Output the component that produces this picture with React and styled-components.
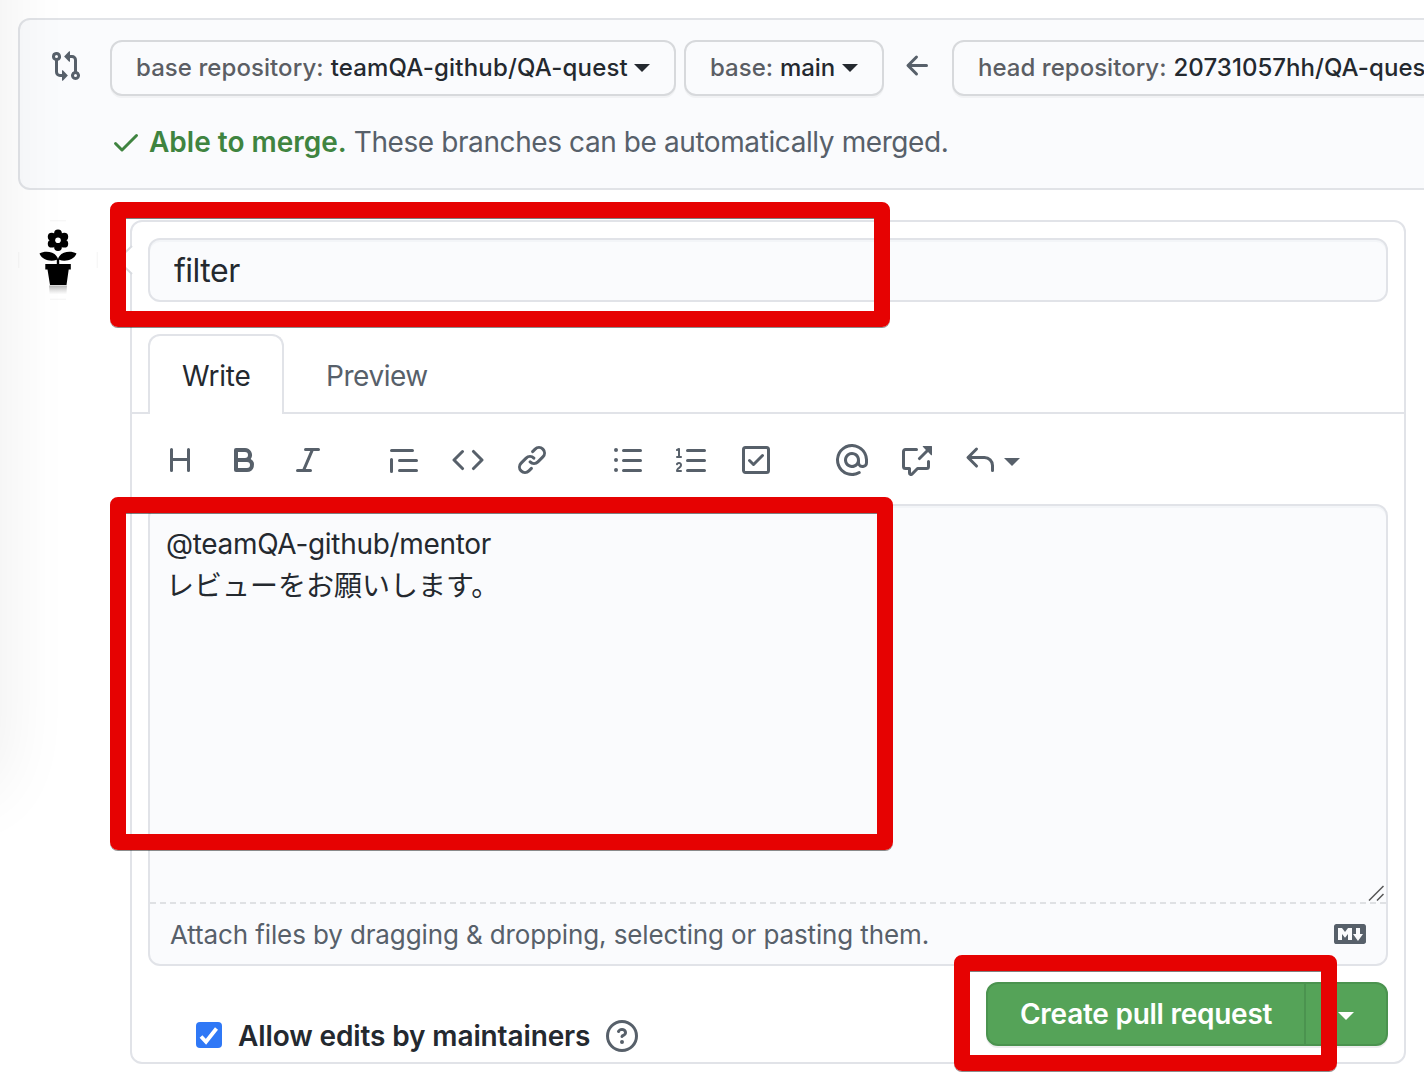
import React from "react";
import styled, { createGlobalStyle } from "styled-components";

const GlobalStyle = createGlobalStyle`
  *, *::before, *::after { box-sizing: border-box; }
  html, body { margin: 0; padding: 0; background: #fff; }
  body {
    overflow: hidden;
    color: #24292f;
    font-family: Inter, "Noto Sans CJK JP", sans-serif;
    font-size: 28px;
  }
  button, textarea, input { font: inherit; color: inherit; margin: 0; }
`;

const paths = {
  compare:
    "M9.573.677L7.177 3.073a.25.25 0 000 .354l2.396 2.396A.25.25 0 0010 5.646V4h1a1 1 0 011 1v5.628a2.251 2.251 0 101.5 0V5A2.5 2.5 0 0011 2.5h-1V.854a.25.25 0 00-.427-.177zM12.75 12a.75.75 0 100 1.5.75.75 0 000-1.5zM3.25 2.5a.75.75 0 100 1.5.75.75 0 000-1.5zm-2.25.75a2.25 2.25 0 113 2.122V11a1 1 0 001 1h1v-1.646a.25.25 0 01.427-.177l2.396 2.396a.25.25 0 010 .354l-2.396 2.396A.25.25 0 016 15.146V13.5H5A2.5 2.5 0 012.5 11V5.372A2.25 2.25 0 011 3.25z",
  check:
    "M13.78 4.22a.75.75 0 010 1.06l-7.25 7.25a.75.75 0 01-1.06 0L2.22 9.28a.75.75 0 011.06-1.06L6 10.94l6.72-6.72a.75.75 0 011.06 0z",
  arrowLeft:
    "M7.78 12.53a.75.75 0 01-1.06 0L2.47 8.28a.75.75 0 010-1.06l4.25-4.25a.75.75 0 011.06 1.06L4.81 7h7.44a.75.75 0 010 1.5H4.81l2.97 2.97a.75.75 0 010 1.06z",
  heading:
    "M3.75 2a.75.75 0 01.75.75V7h7V2.75a.75.75 0 011.5 0v10.5a.75.75 0 01-1.5 0V8.5h-7v4.75a.75.75 0 01-1.5 0V2.75A.75.75 0 013.75 2z",
  bold: "M4 2a1 1 0 00-1 1v10a1 1 0 001 1h5.5a3.5 3.5 0 001.852-6.47A3.5 3.5 0 008.5 2H4zm4.5 5a1.5 1.5 0 100-3H5v3h3.5zM5 9v3h4.5a1.5 1.5 0 000-3H5z",
  italic:
    "M6 2.75A.75.75 0 016.75 2h6.5a.75.75 0 010 1.5h-2.505l-3.858 9H9.25a.75.75 0 010 1.5h-6.5a.75.75 0 010-1.5h2.505l3.858-9H6.75A.75.75 0 016 2.75z",
  quote:
    "M1.75 2.5a.75.75 0 000 1.5h10.5a.75.75 0 000-1.5H1.75zm4 5a.75.75 0 000 1.5h8.5a.75.75 0 000-1.5h-8.5zm0 5a.75.75 0 000 1.5h8.5a.75.75 0 000-1.5h-8.5zM2.5 7.75a.75.75 0 00-1.5 0v6a.75.75 0 001.5 0v-6z",
  code: "M4.72 3.22a.75.75 0 011.06 1.06L2.06 8l3.72 3.72a.75.75 0 11-1.06 1.06L.47 8.53a.75.75 0 010-1.06l4.25-4.25zm6.56 0a.75.75 0 10-1.06 1.06L13.94 8l-3.72 3.72a.75.75 0 101.06 1.06l4.25-4.25a.75.75 0 000-1.06l-4.25-4.25z",
  link: "M7.775 3.275a.75.75 0 001.06 1.06l1.25-1.25a2 2 0 112.83 2.83l-2.5 2.5a2 2 0 01-2.83 0 .75.75 0 00-1.06 1.06 3.5 3.5 0 004.95 0l2.5-2.5a3.5 3.5 0 00-4.95-4.95l-1.25 1.25zm-4.69 9.64a2 2 0 010-2.83l2.5-2.5a2 2 0 012.83 0 .75.75 0 001.06-1.06 3.5 3.5 0 00-4.95 0l-2.5 2.5a3.5 3.5 0 004.95 4.95l1.25-1.25a.75.75 0 00-1.06-1.06l-1.25 1.25a2 2 0 01-2.83 0z",
  bullets:
    "M2 4a1 1 0 100-2 1 1 0 000 2zm3.75-1.5a.75.75 0 000 1.5h8.5a.75.75 0 000-1.5h-8.5zm0 5a.75.75 0 000 1.5h8.5a.75.75 0 000-1.5h-8.5zm0 5a.75.75 0 000 1.5h8.5a.75.75 0 000-1.5h-8.5zM3 8a1 1 0 11-2 0 1 1 0 012 0zm-1 6a1 1 0 100-2 1 1 0 000 2z",
  numbers:
    "M2.003 2.5a.5.5 0 00-.723-.447l-1.003.5a.5.5 0 00.446.895l.28-.14V6H.5a.5.5 0 000 1h2.006a.5.5 0 100-1h-.503V2.5zM5 3.25a.75.75 0 01.75-.75h8.5a.75.75 0 010 1.5h-8.5A.75.75 0 015 3.25zm0 5a.75.75 0 01.75-.75h8.5a.75.75 0 010 1.5h-8.5A.75.75 0 015 8.25zm0 5a.75.75 0 01.75-.75h8.5a.75.75 0 010 1.5h-8.5a.75.75 0 01-.75-.75zM.924 10.32l.003-.004a.851.851 0 01.144-.153A.66.66 0 011.5 10c.195 0 .306.068.374.146a.57.57 0 01.128.376c0 .453-.269.682-.8 1.078l-.035.025C.692 11.98 0 12.495 0 13.5a.5.5 0 00.5.5h2.003a.5.5 0 000-1H1.146c.132-.197.351-.372.654-.597l.047-.035c.47-.35 1.156-.858 1.156-1.845 0-.365-.118-.744-.377-1.038-.268-.303-.658-.484-1.126-.484-.48 0-.84.202-1.068.392a1.858 1.858 0 00-.348.384l-.007.011-.002.004-.001.002-.001.001a.5.5 0 00.851.525z",
  tasks:
    "M2.5 2.75a.25.25 0 01.25-.25h10.5a.25.25 0 01.25.25v10.5a.25.25 0 01-.25.25H2.75a.25.25 0 01-.25-.25V2.75zM2.75 1A1.75 1.75 0 001 2.75v10.5c0 .966.784 1.75 1.75 1.75h10.5A1.75 1.75 0 0015 13.25V2.75A1.75 1.75 0 0013.25 1H2.75zm9.03 5.28a.75.75 0 00-1.06-1.06L6.75 9.19 5.28 7.72a.75.75 0 00-1.06 1.06l2 2a.75.75 0 001.06 0l4.5-4.5z",
  mention:
    "M4.75 2.37a6.5 6.5 0 006.5 11.26.75.75 0 01.75 1.298 8 8 0 113.994-7.273.754.754 0 01.006.095v1.5a2.75 2.75 0 01-5.072 1.475A4 4 0 1112 8v1.25a1.25 1.25 0 002.5 0V7.867a6.5 6.5 0 00-9.75-5.496V2.37zM10.5 8a2.5 2.5 0 10-5 0 2.5 2.5 0 005 0z",
  crossReference:
    "M16 1.25v4.146a.25.25 0 01-.427.177L14.03 4.03l-3.75 3.75a.75.75 0 11-1.06-1.06l3.75-3.75-1.543-1.543A.25.25 0 0111.604 1h4.146a.25.25 0 01.25.25zM2.75 3.5a.25.25 0 00-.25.25v7.5c0 .138.112.25.25.25h2a.75.75 0 01.75.75v2.19l2.72-2.72a.75.75 0 01.53-.22h4.5a.25.25 0 00.25-.25v-2.5a.75.75 0 111.5 0v2.5A1.75 1.75 0 0113.25 13H9.06l-2.573 2.573A1.457 1.457 0 014 14.543V13H2.75A1.75 1.75 0 011 11.25v-7.5C1 2.784 1.784 2 2.75 2h5.5a.75.75 0 010 1.5h-5.5z",
  reply:
    "M6.78 1.97a.75.75 0 010 1.06L3.81 6h6.44A4.75 4.75 0 0115 10.75v2.5a.75.75 0 01-1.5 0v-2.5a3.25 3.25 0 00-3.25-3.25H3.81l2.97 2.97a.75.75 0 11-1.06 1.06L1.47 7.28a.75.75 0 010-1.06l4.25-4.25a.75.75 0 011.06 0z",
  question:
    "M8 1.5a6.5 6.5 0 100 13 6.5 6.5 0 000-13zM0 8a8 8 0 1116 0A8 8 0 010 8zm9 3a1 1 0 11-2 0 1 1 0 012 0zM6.92 6.085c.081-.16.19-.299.34-.398.145-.097.371-.187.74-.187.28 0 .553.087.738.225A.613.613 0 019 6.25c0 .177-.04.264-.077.318a.956.956 0 01-.277.245c-.076.051-.158.1-.258.161l-.007.004a7.728 7.728 0 00-.313.195 2.416 2.416 0 00-.692.661.75.75 0 001.248.832.956.956 0 01.276-.245 6.3 6.3 0 01.26-.16l.006-.004c.093-.057.204-.123.313-.195.222-.149.487-.355.692-.662.214-.32.329-.702.329-1.15 0-.76-.36-1.348-.863-1.725A2.76 2.76 0 008 4c-.631 0-1.155.16-1.572.438-.413.276-.68.638-.849.977a.75.75 0 101.342.67z",
  markdown:
    "M14.85 3H1.15C.52 3 0 3.52 0 4.15v7.69C0 12.48.52 13 1.15 13h13.69c.64 0 1.15-.52 1.15-1.15v-7.7C16 3.52 15.48 3 14.85 3zM9 11H7V8L5.5 9.92 4 8v3H2V5h2l1.5 2L7 5h2v6zm2.99.5L9.5 8H11V5h2v3h1.5l-2.51 3.5z",
};

const Svg = styled.svg`
  display: block;
  flex: none;
  width: 32px;
  height: 32px;
  fill: currentColor;
`;

const Icon = ({ name }) => (
  <Svg viewBox="0 0 16 16" aria-hidden="true">
    <path fillRule="evenodd" d={paths[name]} />
  </Svg>
);

const Page = styled.main`
  position: relative;
  width: 1424px;
  height: 1084px;
  padding: 18px 0 0 18px;
  overflow: hidden;
`;

/* Soft shadow cast along the left edge, rounding off near its lower end */
const EdgeShade = styled.div`
  position: absolute;
  top: -100px;
  left: -100px;
  width: 100px;
  height: 890px;
  border-radius: 0 0 30px 0;
  box-shadow: 0 0 72px 2px rgba(0, 0, 0, 0.07);
  pointer-events: none;
`;

const ComparePanel = styled.section`
  width: 1500px;
  height: 172px;
  padding: 20px 30px;
  border: 2px solid #e1e3e7;
  border-radius: 12px;
  background: #fafbfd;
`;

const CompareRow = styled.div`
  display: flex;
  align-items: center;
  height: 56px;
  color: #57606a;
`;

const IconSlot = styled.span`
  display: flex;
  padding-bottom: 4px;
  margin: ${(p) => p.$margin};
`;

const RefButton = styled.button`
  display: flex;
  align-items: center;
  flex: none;
  width: ${(p) => p.$width}px;
  height: 56px;
  margin-right: ${(p) => p.$gap || 0}px;
  padding: 0 0 0 24px;
  border: 2px solid #d7d9dc;
  border-radius: 12px;
  background: #fafbfd;
  box-shadow: 0 2px 0 rgba(27, 31, 36, 0.04);
  color: #24292f;
  font-size: 24px;
  font-weight: 500;
  line-height: 32px;
  white-space: nowrap;
`;

const RefLabel = styled.span`
  margin-right: 7px;
  color: #5b5e64;
  letter-spacing: ${(p) => p.$track || 0}px;
`;

const RefName = styled.span`
  color: #24292f;
  letter-spacing: ${(p) => p.$track || 0}px;
`;

const Caret = styled.span`
  width: 0;
  height: 0;
  margin: ${(p) => p.$margin || "0"};
  border: 8px solid transparent;
  border-top-color: currentColor;
  border-bottom: 0;
`;

const MergeStatus = styled.p`
  display: flex;
  align-items: center;
  height: 42px;
  margin: 25px 0 0 60px;
  color: #57606a;
  letter-spacing: ${(p) => p.$track}px;
  white-space: nowrap;
  & > svg { color: #3f8440; }
`;

const MergeOk = styled.strong`
  margin: 0 7px;
  color: #3f8440;
  font-weight: 600;
  letter-spacing: 0;
`;

const Discussion = styled.div`
  display: flex;
  align-items: flex-start;
  margin-top: 30px;
`;

const Avatar = styled.svg`
  display: block;
  flex: none;
  width: 80px;
  height: 80px;
  margin-right: 32px;
`;

const Composer = styled.form`
  position: relative;
  width: 1276px;
  height: 844px;
  padding-top: 16px;
  border: 2px solid #e1e3e8;
  border-radius: 12px;
  background: #fff;
`;

const Notch = styled.svg`
  position: absolute;
  left: -16px;
  top: 22px;
  width: 17px;
  height: 32px;
`;

const TitleField = styled.input`
  display: block;
  width: 1240px;
  height: 64px;
  margin: 0 16px;
  padding: 1px 24px 0;
  border: 2px solid #e1e3e8;
  border-radius: 12px;
  outline: 0;
  background: #fafbfd;
  box-shadow: inset 0 2px 0 rgba(208, 215, 222, 0.15);
  font-size: 32px;
  letter-spacing: ${(p) => p.$track}px;
`;

const Tabs = styled.div`
  display: flex;
  align-items: flex-end;
  height: 112px;
  padding-left: 16px;
  border-bottom: 2px solid #e1e3e8;
`;

const Tab = styled.button`
  height: 80px;
  margin-bottom: -2px;
  padding: 2px 0 0 ${(p) => p.$inset}px;
  width: ${(p) => p.$width}px;
  border: 2px solid ${(p) => (p.$active ? "#e1e3e8" : "transparent")};
  border-bottom: 0;
  border-radius: 12px 12px 0 0;
  background: ${(p) => (p.$active ? "#fff" : "transparent")};
  color: ${(p) => (p.$active ? "#24292f" : "#57606a")};
  letter-spacing: ${(p) => p.$track}px;
  text-align: left;
`;

const Toolbar = styled.div`
  display: flex;
  align-items: center;
  gap: 64px;
  height: 90px;
  padding: 2px 32px 0;
  color: #57606a;
`;

const ToolGroup = styled.div`
  display: flex;
  align-items: center;
  gap: 32px;
`;

const ReplyTool = styled.span`
  display: flex;
  align-items: center;
  gap: 8px;
`;

const Editor = styled.div`
  position: relative;
  display: flex;
  flex-direction: column;
  width: 1240px;
  height: 462px;
  margin: 0 16px;
  border: 2px solid #e1e3e8;
  border-radius: 12px;
  background: #fafbfd;
  box-shadow: inset 0 2px 0 rgba(208, 215, 222, 0.15);
`;

const BodyText = styled.div`
  flex: 1;
  padding: 17px 16px;
  line-height: 42px;
`;

const Line = styled.p`
  margin: 0;
  height: 42px;
  letter-spacing: ${(p) => p.$track}px;
`;

const Grip = styled.svg`
  position: absolute;
  right: 2px;
  top: 379px;
  width: 16px;
  height: 16px;
`;

const AttachBar = styled.div`
  display: flex;
  align-items: center;
  justify-content: space-between;
  height: 62px;
  padding: 0 20px;
  border-top: 2px dashed #dfe1e4;
  color: #57606a;
  font-size: 26px;
  letter-spacing: ${(p) => p.$track}px;
`;

const Actions = styled.div`
  display: flex;
  justify-content: space-between;
  align-items: flex-start;
  padding: 16px 16px 0 64px;
`;

const AllowEdits = styled.label`
  display: flex;
  align-items: center;
  height: 34px;
  margin-top: 37px;
  font-weight: 600;
  white-space: nowrap;
  & > svg:last-child { color: #57606a; }
`;

const CheckMark = styled.svg`
  width: 26px;
  height: 26px;
  margin: 0 16px 2px 0;
  border-radius: 4px;
  background: #2f78f6;
`;

const AllowText = styled.span`
  width: 368px;
  letter-spacing: ${(p) => p.$track}px;
`;

const SubmitGroup = styled.div`
  display: flex;
  height: 64px;
  border: 2px solid #4b934f;
  border-radius: 12px;
  background: #55a358;
  box-shadow: 0 2px 0 rgba(27, 31, 36, 0.08);
  color: #fff;
`;

const Submit = styled.button`
  width: 318px;
  padding: 0 0 0 32px;
  border: 0;
  border-right: 2px solid #4b934f;
  background: transparent;
  font-weight: 600;
  text-align: left;
  white-space: nowrap;
  letter-spacing: ${(p) => p.$track}px;
`;

const SubmitMenu = styled.button`
  width: 80px;
  padding: 3px 0 0 32px;
  border: 0;
  background: transparent;
`;

const CaretBlock = styled(Caret)`
  display: block;
`;

/* Red highlight frames laid over the form */
const Highlight = styled.div`
  position: absolute;
  left: ${(p) => p.$x}px;
  top: ${(p) => p.$y}px;
  width: ${(p) => p.$w}px;
  height: ${(p) => p.$h}px;
  border: 16px solid #e60202;
  border-radius: 8px;
  box-shadow: 0 1px 0 rgba(0, 0, 0, 0.45), inset 0 1px 0 rgba(0, 0, 0, 0.5);
  pointer-events: none;
`;

function FlowerAvatar() {
  return (
    <Avatar viewBox="0 0 80 80">
      <defs>
        <linearGradient id="potShade" x1="0" y1="0" x2="0" y2="1">
          <stop offset="0" stopColor="#999" stopOpacity=".75" />
          <stop offset="1" stopColor="#bbb" stopOpacity="0" />
        </linearGradient>
      </defs>
      <circle cx="40" cy="40" r="40" fill="#fff" />
      <path d="M32 .8h16M32 79.200h16M.8 32v16M79.200 32v16" fill="none" stroke="#f4f4f4" />
      <circle cx="40" cy="13.3" r="3.9" />
      <circle cx="40" cy="27.1" r="3.9" />
      <circle cx="33.7" cy="16.7" r="3.9" />
      <circle cx="46.3" cy="16.7" r="3.9" />
      <circle cx="33.7" cy="23.7" r="3.9" />
      <circle cx="46.3" cy="23.7" r="3.9" />
      <circle cx="40" cy="20.2" r="5" />
      <circle cx="40" cy="20.2" r="2.8" fill="#fff" />
      <path d="M21.500 33.600c6-3.600 16.500-1.900 18.500 5.400 2-7.300 12.500-9 18.500-5.400-2.500 6.400-11 8.400-17.300 6.200V45h-2.400v-5.200C32.500 42 24 40 21.500 33.600z" />
      <path d="M27.300 44h25.500v5.500h-2.100L48.500 65H32L29.500 49.500h-2.200z" />
      <path d="M31 65.500h18l-.6 9H31.600z" fill="url(#potShade)" />
    </Avatar>
  );
}

export default function App() {
  return (
    <>
      <GlobalStyle />
      <Page>
        <ComparePanel>
          <CompareRow>
            <IconSlot $margin="0 28px 0 0">
              <Icon name="compare" />
            </IconSlot>
            <RefButton type="button" $width={566} $gap={8}>
              <RefLabel $track={0.07}>base repository:</RefLabel>
              <RefName $track={0.19}>teamQA-github/QA-quest</RefName>
              <Caret $margin="0 0 0 6px" />
            </RefButton>
            <RefButton type="button" $width={200}>
              <RefLabel>base:</RefLabel>
              <RefName $track={-0.1}>main</RefName>
              <Caret $margin="0 0 0 7px" />
            </RefButton>
            <IconSlot $margin="0 18px">
              <Icon name="arrowLeft" />
            </IconSlot>
            <RefButton type="button" $width={560}>
              <RefLabel $track={0.03}>head repository:</RefLabel>
              <RefName $track={0.05}>20731057hh/QA-quest</RefName>
            </RefButton>
          </CompareRow>
          <MergeStatus $track={-0.41}>
            <Icon name="check" />
            <MergeOk>Able to merge.</MergeOk>
            <span>These branches can be automatically merged.</span>
          </MergeStatus>
        </ComparePanel>

        <Discussion>
          <FlowerAvatar />
          <Composer onSubmit={(e) => e.preventDefault()}>
            <Notch viewBox="0 0 17 32">
              <path d="M17 1.500L1 16l16 14.500z" fill="#fff" />
              <path d="M16 2L1 16l15 14" fill="none" stroke="#d8dbe0" strokeWidth="2" />
            </Notch>
            <TitleField type="text" defaultValue="filter" $track={-0.5} aria-label="Title" />
            <Tabs>
              <Tab type="button" $active $width={136} $inset={32} $track={-0.2}>
                Write
              </Tab>
              <Tab type="button" $width={180} $inset={40} $track={-0.45}>
                Preview
              </Tab>
            </Tabs>
            <Toolbar>
              <ToolGroup>
                <Icon name="heading" />
                <Icon name="bold" />
                <Icon name="italic" />
              </ToolGroup>
              <ToolGroup>
                <Icon name="quote" />
                <Icon name="code" />
                <Icon name="link" />
              </ToolGroup>
              <ToolGroup>
                <Icon name="bullets" />
                <Icon name="numbers" />
                <Icon name="tasks" />
              </ToolGroup>
              <ToolGroup>
                <Icon name="mention" />
                <Icon name="crossReference" />
                <ReplyTool>
                  <Icon name="reply" />
                  <Caret $margin="3px 0 0 0" />
                </ReplyTool>
              </ToolGroup>
            </Toolbar>
            <Editor>
              <BodyText>
                <Line $track={-0.31}>@teamQA-github/mentor</Line>
                <Line $track={0}>レビューをお願いします。</Line>
              </BodyText>
              <Grip viewBox="0 0 16 16">
                <path d="M1 15.500L15.500 1M9 15.500l6.500-6.500" stroke="#555" strokeWidth="1.500" />
              </Grip>
              <AttachBar $track={-0.12}>
                <span>Attach files by dragging &amp; dropping, selecting or pasting them.</span>
                <Icon name="markdown" />
              </AttachBar>
            </Editor>
            <Actions>
              <AllowEdits>
                <CheckMark viewBox="0 0 26 26">
                  <path d="M5 14.500l5 5.300L20.500 6.500" fill="none" stroke="#fff" strokeWidth="3.800" />
                </CheckMark>
                <AllowText $track={-0.12}>Allow edits by maintainers</AllowText>
                <Icon name="question" />
              </AllowEdits>
              <SubmitGroup>
                <Submit type="submit" $track={-0.26}>
                  Create pull request
                </Submit>
                <SubmitMenu type="button" aria-label="More options">
                  <CaretBlock />
                </SubmitMenu>
              </SubmitGroup>
            </Actions>
          </Composer>
        </Discussion>

        <EdgeShade />
        <Highlight $x={110} $y={202} $w={780} $h={125} />
        <Highlight $x={110} $y={497} $w={783} $h={353} />
        <Highlight $x={954} $y={955} $w={383} $h={116} />
      </Page>
    </>
  );
}
